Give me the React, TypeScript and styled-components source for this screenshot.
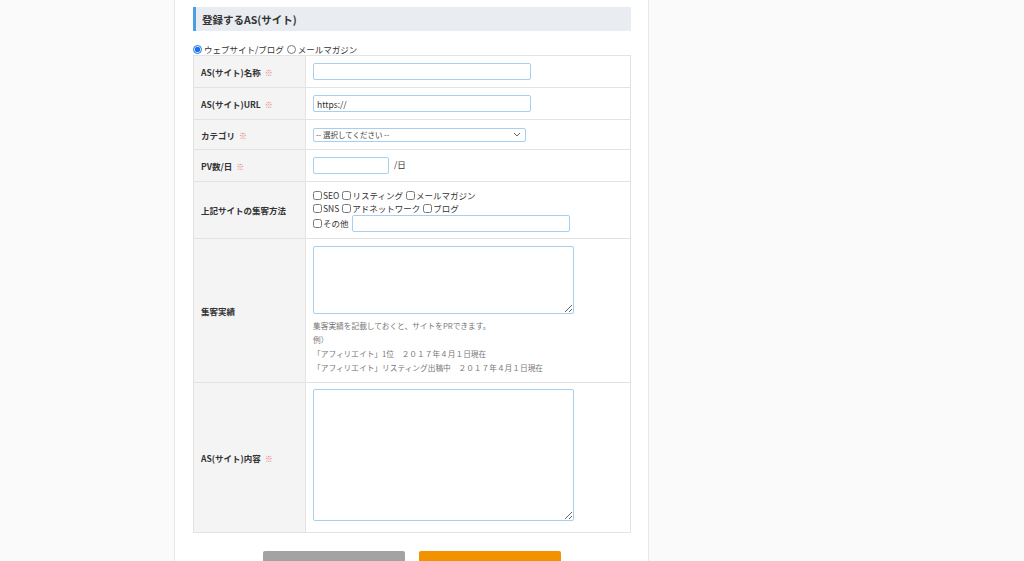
import styled, { createGlobalStyle } from 'styled-components'

const GlobalStyle = createGlobalStyle`
  html, body {
    margin: 0;
    padding: 0;
    background: #fafafa;
    font-family: 'Noto Sans CJK JP', 'Noto Sans', sans-serif;
    color: #333;
  }
`

const Page = styled.div`
  display: flex;
  min-height: 100vh;
  padding-left: 174px;
  overflow: hidden;
  height: 561px;
  box-sizing: border-box;
`

const Container = styled.div`
  width: 475px;
  box-sizing: border-box;
  background: #fff;
  border-left: 1px solid #e8e8e8;
  border-right: 1px solid #e8e8e8;
  padding: 7px 17px 0 18px;
`

const SectionTitle = styled.h2`
  margin: 0;
  height: 24px;
  display: flex;
  align-items: center;
  box-sizing: border-box;
  padding-left: 6px;
  border-left: 3px solid #4a9ee2;
  background: #e9edf1;
  font-size: 10.5px;
  font-weight: bold;
  color: #333;
`

const RadioRow = styled.div`
  display: flex;
  align-items: center;
  height: 12px;
  margin-top: 12px;
  font-size: 8.5px;
  line-height: 12px;
`

const Radio = styled.input.attrs({ type: 'radio' })`
  width: 9px;
  height: 9px;
  margin: 0 2px 0 0;
  accent-color: #1a73e8;
`

const RadioLabel = styled.label`
  display: inline-flex;
  align-items: center;
  margin-right: 3px;
`

const FormTable = styled.table`
  width: 100%;
  border-collapse: collapse;
  border: 1px solid #e3e3e3;
  font-size: 8.5px;

  td, th {
    border: 1px solid #e3e3e3;
    padding: 0 7px;
    vertical-align: middle;
  }
`

const Row = styled.tr<{ $h: number }>`
  height: ${p => p.$h}px;
`

const Label = styled.th`
  width: 97px;
  background: #f4f4f4;
  text-align: left;
  font-weight: bold;
  font-size: 8.5px;
  color: #333;
`

const Req = styled.span`
  color: #e8777a;
  font-weight: normal;
  margin-left: 4px;
  font-size: 8px;
`

const Field = styled.td<{ $top?: number }>`
  background: #fff;
  && {
    ${p => (p.$top !== undefined ? `vertical-align: top; padding-top: ${p.$top}px;` : '')}
  }
`

const TextInput = styled.input<{ $w?: number }>`
  width: ${p => p.$w ?? 218}px;
  height: 17px;
  box-sizing: border-box;
  border: 1px solid #a9cfee;
  border-radius: 2px;
  padding: 0 3px;
  font-family: inherit;
  font-size: 8.5px;
  color: #333;
  outline: none;
  vertical-align: middle;
`

const Select = styled.select`
  width: 213px;
  height: 14px;
  box-sizing: border-box;
  border: 1px solid #a9cfee;
  border-radius: 2px;
  padding: 0 2px;
  font-family: inherit;
  font-size: 7.5px;
  color: #444;
  background: #fff;
  appearance: none;
  background-image: url("data:image/svg+xml,%3Csvg xmlns='http://www.w3.org/2000/svg' width='8' height='5'%3E%3Cpath d='M1 1l3 3 3-3' fill='none' stroke='%23666' stroke-width='1'/%3E%3C/svg%3E");
  background-repeat: no-repeat;
  background-position: right 4px center;
  outline: none;
`

const Unit = styled.span`
  margin-left: 5px;
`

const CheckLines = styled.div`
  display: flex;
  flex-direction: column;
`

const CheckLine = styled.div`
  display: flex;
  align-items: center;
  min-height: 13px;
`

const CheckItem = styled.label`
  display: inline-flex;
  align-items: center;
  margin-right: 3px;
  color: #333;
`

const Check = styled.input.attrs({ type: 'checkbox' })`
  width: 9px;
  height: 9px;
  margin: 0 1px 0 0;
`

const TextArea = styled.textarea<{ $h: number }>`
  display: block;
  width: 261px;
  height: ${p => p.$h}px;
  box-sizing: border-box;
  border: 1px solid #a9cfee;
  border-radius: 2px;
  resize: both;
  outline: none;
`

const Help = styled.div`
  margin-top: 5px;
  font-size: 7.7px;
  line-height: 14px;
  color: #777;
`

const Buttons = styled.div`
  display: flex;
  justify-content: center;
  gap: 14px;
  margin-top: 18px;
`

const Button = styled.button<{ $primary?: boolean }>`
  width: 142px;
  height: 34px;
  border: none;
  border-radius: 2px;
  background: ${p => (p.$primary ? '#f39200' : '#a3a3a3')};
  color: #fff;
  font-family: inherit;
  font-size: 12px;
  font-weight: bold;
`

export default function App() {
  return (
    <>
      <GlobalStyle />
      <Page>
        <Container>
          <SectionTitle>登録するAS(サイト)</SectionTitle>
          <RadioRow>
            <RadioLabel>
              <Radio name="kind" defaultChecked />
              ウェブサイト/ブログ
            </RadioLabel>
            <RadioLabel>
              <Radio name="kind" />
              メールマガジン
            </RadioLabel>
          </RadioRow>
          <FormTable>
            <tbody>
              <Row $h={32}>
                <Label>AS(サイト)名称<Req>※</Req></Label>
                <Field><TextInput /></Field>
              </Row>
              <Row $h={32}>
                <Label>AS(サイト)URL<Req>※</Req></Label>
                <Field><TextInput defaultValue="https://" /></Field>
              </Row>
              <Row $h={30}>
                <Label>カテゴリ<Req>※</Req></Label>
                <Field>
                  <Select defaultValue="">
                    <option value="">-- 選択してください --</option>
                  </Select>
                </Field>
              </Row>
              <Row $h={32}>
                <Label>PV数/日<Req>※</Req></Label>
                <Field>
                  <TextInput $w={76} />
                  <Unit>/日</Unit>
                </Field>
              </Row>
              <Row $h={57}>
                <Label>上記サイトの集客方法</Label>
                <Field>
                  <CheckLines>
                    <CheckLine>
                      <CheckItem><Check />SEO</CheckItem>
                      <CheckItem><Check />リスティング</CheckItem>
                      <CheckItem><Check />メールマガジン</CheckItem>
                    </CheckLine>
                    <CheckLine>
                      <CheckItem><Check />SNS</CheckItem>
                      <CheckItem><Check />アドネットワーク</CheckItem>
                      <CheckItem><Check />ブログ</CheckItem>
                    </CheckLine>
                    <CheckLine>
                      <CheckItem><Check />その他</CheckItem>
                      <TextInput />
                    </CheckLine>
                  </CheckLines>
                </Field>
              </Row>
              <Row $h={144}>
                <Label>集客実績</Label>
                <Field $top={7}>
                  <TextArea $h={68} />
                  <Help>
                    集客実績を記載しておくと、サイトをPRできます。<br />
                    例）<br />
                    「アフィリエイト」1位　２０１７年４月１日現在<br />
                    「アフィリエイト」リスティング出稿中　２０１７年４月１日現在
                  </Help>
                </Field>
              </Row>
              <Row $h={150}>
                <Label>AS(サイト)内容<Req>※</Req></Label>
                <Field $top={6}><TextArea $h={132} /></Field>
              </Row>
            </tbody>
          </FormTable>
          <Buttons>
            <Button>戻る</Button>
            <Button $primary>入力内容を確認</Button>
          </Buttons>
        </Container>
      </Page>
    </>
  )
}
